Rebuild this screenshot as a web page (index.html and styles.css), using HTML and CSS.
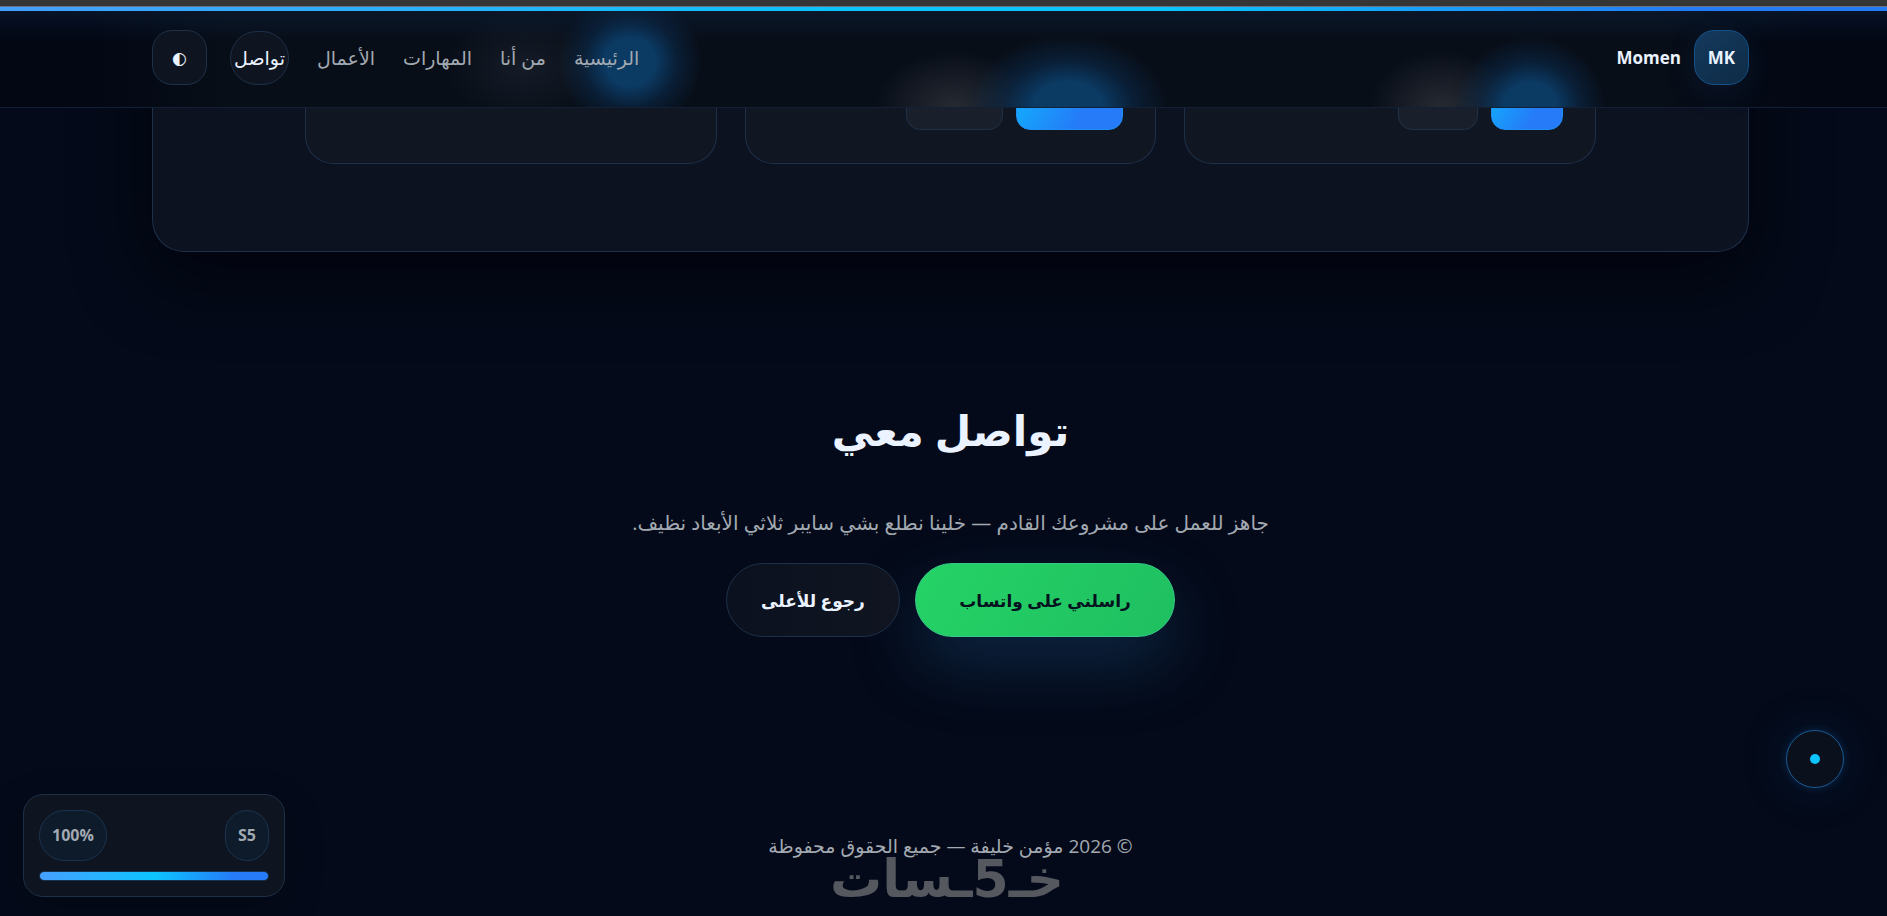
FILE: index.html
```html
<!DOCTYPE html>
<html lang="ar" dir="rtl">
<head>
<meta charset="utf-8">
<title>Momen</title>
<link rel="stylesheet" href="styles.css">
</head>
<body>
<header class="topbar">
  <div class="scroll-progress"></div>
  <div class="topbar-inner">
    <a class="brand" href="#home"><span class="brand-mark">MK</span><span>Momen</span></a>
    <div class="nav-side">
      <nav class="nav">
        <a class="nav-link" href="#home">الرئيسية</a>
        <a class="nav-link" href="#about">من أنا</a>
        <a class="nav-link" href="#skills">المهارات</a>
        <a class="nav-link" href="#work">الأعمال</a>
        <a class="nav-link nav-link-active" href="#contact">تواصل</a>
      </nav>
      <button class="theme-toggle" type="button">◐</button>
    </div>
  </div>
</header>
<main class="page">
  <section class="panel" id="work">
    <div class="cards">
      <article class="card"><span class="chip chip-primary chip-small"></span><span class="chip chip-medium"></span></article>
      <article class="card"><span class="chip chip-primary chip-large"></span><span class="chip chip-wide"></span></article>
      <article class="card"></article>
    </div>
  </section>
  <section class="contact" id="contact">
    <h2 class="contact-title">تواصل معي</h2>
    <p class="contact-text">جاهز للعمل على مشروعك القادم — خلينا نطلع بشي سايبر ثلاثي الأبعاد نظيف.</p>
    <div class="actions">
      <a class="btn btn-whatsapp" href="#whatsapp">راسلني على واتساب</a>
      <a class="btn btn-ghost" href="#home">رجوع للأعلى</a>
    </div>
  </section>
</main>
<footer class="footer">© 2026 مؤمن خليفة — جميع الحقوق محفوظة</footer>
<div class="watermark">خـ5ـسات</div>
<aside class="status">
  <div class="status-row"><span class="badge">S5</span><span class="badge" dir="ltr">100%</span></div>
  <div class="status-bar"></div>
</aside>
<div class="orb"></div>
</body>
</html>
```
FILE: styles.css
```css
* { box-sizing: border-box; }
body {
  margin: 0;
  padding-left: 14px;
  min-height: 100vh;
  overflow-x: hidden;
  background: #040a19;
  color: #eaf3ff;
  font-family: "Open Sans", "DejaVu Sans", sans-serif;
  font-size: 19px;
}
a { color: inherit; text-decoration: none; }
.topbar {
  position: fixed;
  z-index: 5;
  top: 0;
  left: 0;
  right: 0;
  border-top: 6px solid #353535;
  border-bottom: 1px solid #132033;
  background:
    linear-gradient(rgba(12, 34, 64, 0.5), rgba(12, 34, 64, 0) 35%),
    radial-gradient(72px 70px at 33.4% 55%, #0b3a63 35%, rgba(11, 50, 90, 0.45) 65%, rgba(11, 40, 70, 0)),
    radial-gradient(100px 72px at 56.6% 100%, #0b3a63 35%, rgba(11, 50, 90, 0.45) 65%, rgba(11, 40, 70, 0)),
    radial-gradient(76px 70px at 81.1% 100%, #0b3a63 35%, rgba(11, 50, 90, 0.45) 65%, rgba(11, 40, 70, 0)),
    radial-gradient(80px 56px at 27.8% 60%, #161c27, rgba(22, 28, 39, 0)),
    radial-gradient(80px 56px at 50.6% 100%, #262a33, rgba(30, 34, 44, 0)),
    radial-gradient(72px 56px at 76.4% 100%, #262a33, rgba(30, 34, 44, 0)),
    linear-gradient(90deg, #020713 5%, #080e18 12%, #080e18 88%, #020713 96%);
}
.scroll-progress {
  height: 5px;
  border-top: 1px solid #66727d;
  background: linear-gradient(90deg, #46a0ff, #0cc4ff 45%, #0cc4ff 62%, #257bf8 90%);
}
.topbar-inner {
  display: flex;
  align-items: center;
  justify-content: space-between;
  height: 96px;
  padding: 0 138px 3px 152px;
}
.brand { display: flex; align-items: center; gap: 13px; font-size: 17px; font-weight: 700; }
.brand-mark {
  display: grid;
  place-items: center;
  width: 55px;
  height: 55px;
  border: 1px solid #15528a;
  border-radius: 20px;
  background: linear-gradient(145deg, #153a5e, #0d2b45);
  box-shadow: 0 8px 28px rgba(30, 60, 120, 0.2);
}
.nav-side { display: flex; align-items: center; gap: 23px; }
.nav { display: flex; align-items: center; gap: 28px; color: #a2a9b1; }
.nav-link-active {
  width: 59px;
  height: 54px;
  line-height: 52px;
  border: 1px solid #1e3048;
  border-radius: 28px;
  background: #0f1520;
  color: #eaf3ff;
  text-align: center;
}
.theme-toggle {
  width: 55px;
  height: 55px;
  padding: 0;
  border: 1px solid #1e3048;
  border-radius: 20px;
  background: #0f1520;
  color: #eaf3ff;
  font: 17px "DejaVu Sans", sans-serif;
}
.page { padding: 0 138px; }
.panel {
  height: 252px;
  padding: 0 152px;
  border: 1px solid #1e3048;
  border-top: 0;
  border-radius: 0 0 32px 32px;
  background: #0c1220;
  box-shadow: 0 24px 72px rgba(0, 2, 8, 0.7);
}
.cards { display: grid; grid-template-columns: repeat(3, 1fr); gap: 28px; height: 164px; }
.card {
  display: flex;
  align-items: flex-end;
  gap: 13px;
  padding: 0 32px 33px;
  border: 1px solid #1e3048;
  border-top: 0;
  border-radius: 0 0 28px 28px;
  background: #111722;
}
.chip {
  height: 56px;
  border: 1px solid #1e3048;
  border-radius: 14px;
  background: #1a202b;
}
.chip-primary { border-color: #1f8ef5; background: linear-gradient(120deg, #0fb4fc, #257bf8 65%); }
.chip-small { width: 72px; }
.chip-medium { width: 80px; }
.chip-wide { width: 97px; }
.chip-large { width: 107px; }
.contact {
  display: flex;
  flex-direction: column;
  align-items: center;
  padding-top: 138px;
  text-align: center;
}
.contact-title { margin: 0; font-size: 42px; line-height: 80px; font-weight: 700; }
.contact-text { margin: 37px 0 24px; font-size: 20px; line-height: 32px; color: #a2a9b1; }
.actions { display: flex; gap: 15px; }
.btn {
  display: grid;
  place-items: center;
  height: 74px;
  border: 1px solid #1e3048;
  border-radius: 37px;
  font-size: 17px;
  font-weight: 700;
}
.btn-whatsapp {
  width: 260px;
  border-color: #36c98a;
  background: linear-gradient(120deg, #25d366, #1fbf60);
  color: #04121f;
  box-shadow: 0 28px 64px rgba(30, 90, 140, 0.35);
}
.btn-ghost { width: 174px; background: linear-gradient(90deg, #0b111f, #101521); }
.footer { padding-top: 189px; line-height: 40px; color: #a2a9b1; text-align: center; }
.watermark {
  position: fixed;
  left: 830px;
  bottom: 9px;
  color: #55585f;
  font: 700 52px/56px "DejaVu Sans", sans-serif;
}
.status {
  position: fixed;
  left: 23px;
  bottom: 19px;
  width: 262px;
  padding: 15px;
  border: 1px solid #1e3048;
  border-radius: 20px;
  background: #0f1520;
  box-shadow: 0 12px 40px rgba(0, 0, 0, 0.2);
}
.status-row { display: flex; justify-content: space-between; }
.badge {
  height: 51px;
  padding: 0 12px;
  border: 1px solid #1b3350;
  border-radius: 26px;
  background: #0d1b2b;
  color: #a2a9b1;
  font-size: 16px;
  line-height: 49px;
  font-weight: 700;
}
.status-bar {
  height: 10px;
  margin-top: 10px;
  border: 1px solid #17334f;
  border-radius: 5px;
  background: linear-gradient(90deg, #46a0ff, #0cc4ff 50%, #257bf8 85%);
}
.orb {
  position: fixed;
  right: 43px;
  bottom: 128px;
  display: grid;
  place-items: center;
  width: 58px;
  height: 58px;
  border: 1px solid #185a92;
  border-radius: 50%;
  background: #0b101d;
  box-shadow: 0 0 8px rgba(20, 100, 170, 0.3), 0 0 50px rgba(20, 80, 150, 0.2);
}
.orb::after { content: ""; width: 10px; height: 10px; border-radius: 50%; background: #0cc4ff; }
```
